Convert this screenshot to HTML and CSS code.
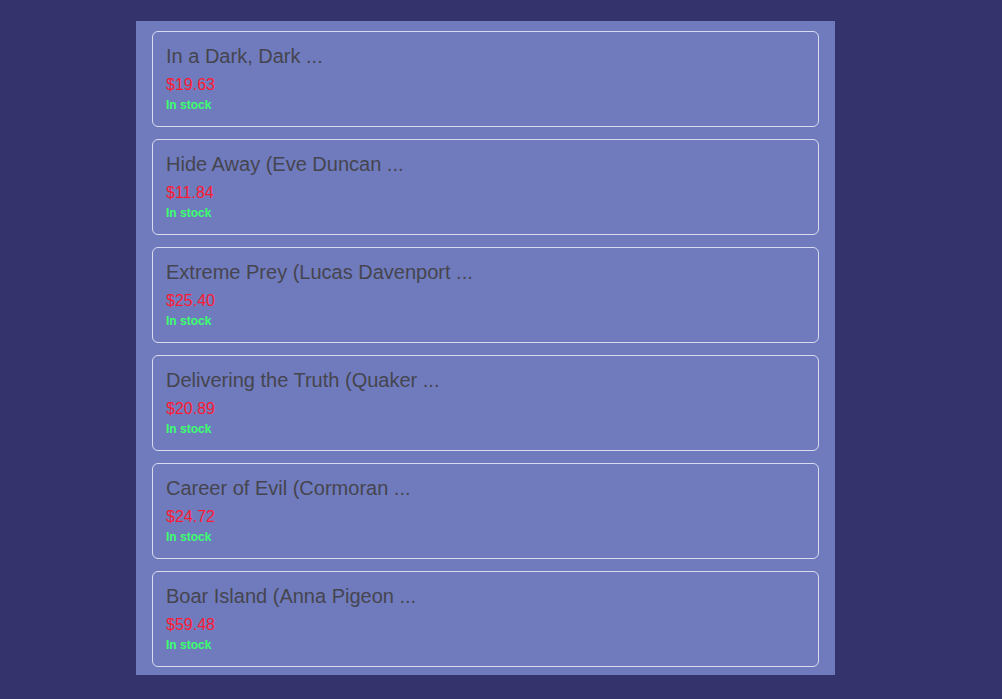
FILE: index.html
```html
<!DOCTYPE html>
<html>
<head>
<meta charset="utf-8">
<link rel="stylesheet" href="styles.css">
</head>
<body>
<div class="panel">
  <div class="card"><div class="title">In a Dark, Dark ...</div><div class="price">$19.63</div><div class="stock">In stock</div></div>
  <div class="card"><div class="title">Hide Away (Eve Duncan ...</div><div class="price">$11.84</div><div class="stock">In stock</div></div>
  <div class="card"><div class="title">Extreme Prey (Lucas Davenport ...</div><div class="price">$25.40</div><div class="stock">In stock</div></div>
  <div class="card"><div class="title">Delivering the Truth (Quaker ...</div><div class="price">$20.89</div><div class="stock">In stock</div></div>
  <div class="card"><div class="title">Career of Evil (Cormoran ...</div><div class="price">$24.72</div><div class="stock">In stock</div></div>
  <div class="card"><div class="title">Boar Island (Anna Pigeon ...</div><div class="price">$59.48</div><div class="stock">In stock</div></div>
</div>
</body>
</html>
```
FILE: styles.css
```css
html, body { margin: 0; padding: 0; }
body {
  background: #35336b;
  font-family: "Liberation Sans", Arial, sans-serif;
  height: 699px;
  overflow: hidden;
}
.panel {
  margin: 21px 0 0 136px;
  width: 699px;
  box-sizing: border-box;
  padding: 10px 16px 8px;
  background: #707bbd;
  display: flex;
  flex-direction: column;
  gap: 12px;
}
.card {
  height: 96px;
  box-sizing: border-box;
  border: 1px solid #d9dcf0;
  border-radius: 6px;
  padding: 12px 13px 0;
}
.title {
  font-size: 20px;
  line-height: 24px;
  color: #45454f;
}
.price {
  margin-top: 8px;
  font-size: 16px;
  line-height: 18px;
  color: #ff1a33;
}
.stock {
  margin-top: 4px;
  font-size: 12px;
  line-height: 14px;
  font-weight: bold;
  color: #3cff6e;
}
```
